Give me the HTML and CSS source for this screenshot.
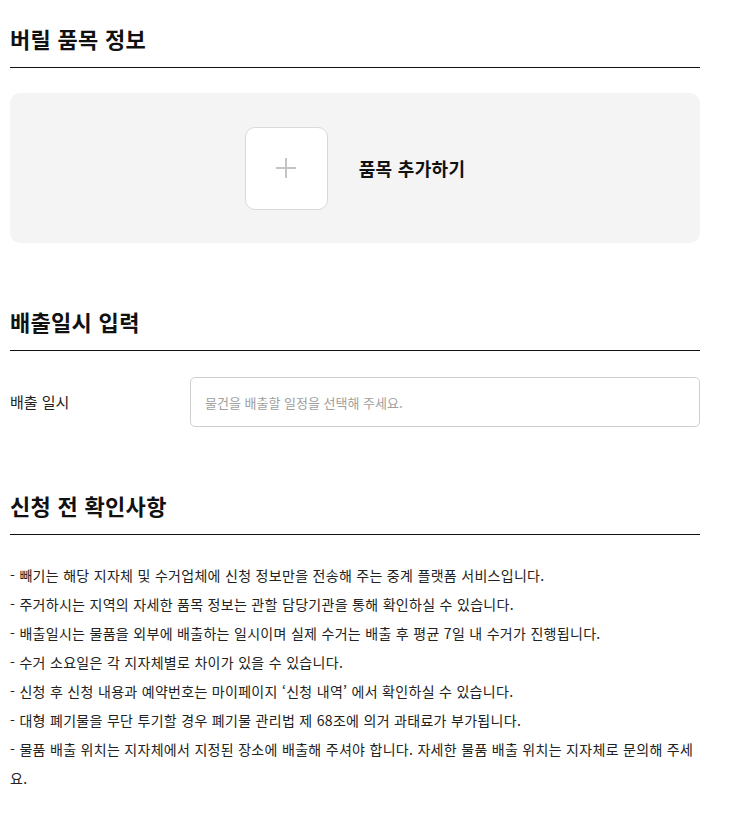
FILE: index.html
```html
<!DOCTYPE html>
<html lang="ko">
<head>
    <meta charset="UTF-8">
    <title>배출 신청</title>
    <meta name="viewport" content="width=device-width">
    <link rel="stylesheet" href="styles.css">
</head>
<body>
    <div class="page">
        <section class="section section-items">
            <h2 class="section-title">버릴 품목 정보</h2>
            <div class="item-box">
                <button class="add-btn" type="button" aria-label="품목 추가">
                    <svg width="22" height="22" viewBox="0 0 22 22">
                        <path d="M11 1v20M1 11h20" stroke="#c4c4c4" stroke-width="2" fill="none"/>
                    </svg>
                </button>
                <span class="add-text">품목 추가하기</span>
            </div>
        </section>

        <section class="section">
            <h2 class="section-title">배출일시 입력</h2>
            <div class="field-row">
                <label class="field-label" for="input-date">배출 일시</label>
                <input class="field-input" type="text" id="input-date" placeholder="물건을 배출할 일정을 선택해 주세요.">
            </div>
        </section>

        <section class="section">
            <h2 class="section-title">신청 전 확인사항</h2>
            <ul class="notice">
                <li>- 빼기는 해당 지자체 및 수거업체에 신청 정보만을 전송해 주는 중계 플랫폼 서비스입니다.</li>
                <li>- 주거하시는 지역의 자세한 품목 정보는 관할 담당기관을 통해 확인하실 수 있습니다.</li>
                <li>- 배출일시는 물품을 외부에 배출하는 일시이며 실제 수거는 배출 후 평균 7일 내 수거가 진행됩니다.</li>
                <li>- 수거 소요일은 각 지자체별로 차이가 있을 수 있습니다.</li>
                <li>- 신청 후 신청 내용과 예약번호는 마이페이지 ‘신청 내역’ 에서 확인하실 수 있습니다.</li>
                <li>- 대형 폐기물을 무단 투기할 경우 폐기물 관리법 제 68조에 의거 과태료가 부가됩니다.</li>
                <li>- 물품 배출 위치는 지자체에서 지정된 장소에 배출해 주셔야 합니다. 자세한 물품 배출 위치는 지자체로 문의해 주세요.</li>
            </ul>
        </section>
    </div>
</body>
</html>
```

FILE: styles.css
```css
*,
*::after,
*::before{
    padding: 0;
    margin: 0;
    box-sizing: border-box;
}
html{
    font: normal 14px/1.5 "Noto Sans CJK KR", "Noto Sans", sans-serif;
    color: #222;
    background: #fff;
}
.page{
    width: 690px;
    margin-left: 10px;
    padding-top: 23px;
}
.section + .section{
    margin-top: 63px;
}
.section-title{
    font-size: 22px;
    font-weight: 700;
    line-height: 30px;
    letter-spacing: 0.3px;
    color: #111;
    padding-bottom: 14px;
    border-bottom: 1px solid #111;
}
.item-box{
    margin-top: 25px;
    height: 150px;
    background-color: #f4f4f4;
    border-radius: 10px;
    display: flex;
    align-items: center;
    justify-content: center;
    gap: 31px;
}
.add-btn{
    width: 83px;
    height: 83px;
    background: #fff;
    border: 1px solid #d9d9d9;
    border-radius: 10px;
    display: flex;
    align-items: center;
    justify-content: center;
    cursor: pointer;
}
.add-text{
    font-size: 18px;
    font-weight: 700;
    letter-spacing: 0.3px;
    color: #111;
}
.field-row{
    margin-top: 26px;
    display: flex;
    align-items: center;
}
.field-label{
    width: 180px;
    font-size: 15px;
    color: #222;
}
.field-input{
    flex: 1;
    height: 50px;
    border: 1px solid #cfcfcf;
    border-radius: 5px;
    padding: 0 14px;
    font: inherit;
    font-size: 13px;
    color: #222;
}
.field-input::placeholder{
    color: #a0a0a0;
}
.notice{
    list-style: none;
    margin-top: 26px;
}
.notice li{
    font-size: 14px;
    line-height: 29px;
    letter-spacing: 0.3px;
    color: #222;
}
```
